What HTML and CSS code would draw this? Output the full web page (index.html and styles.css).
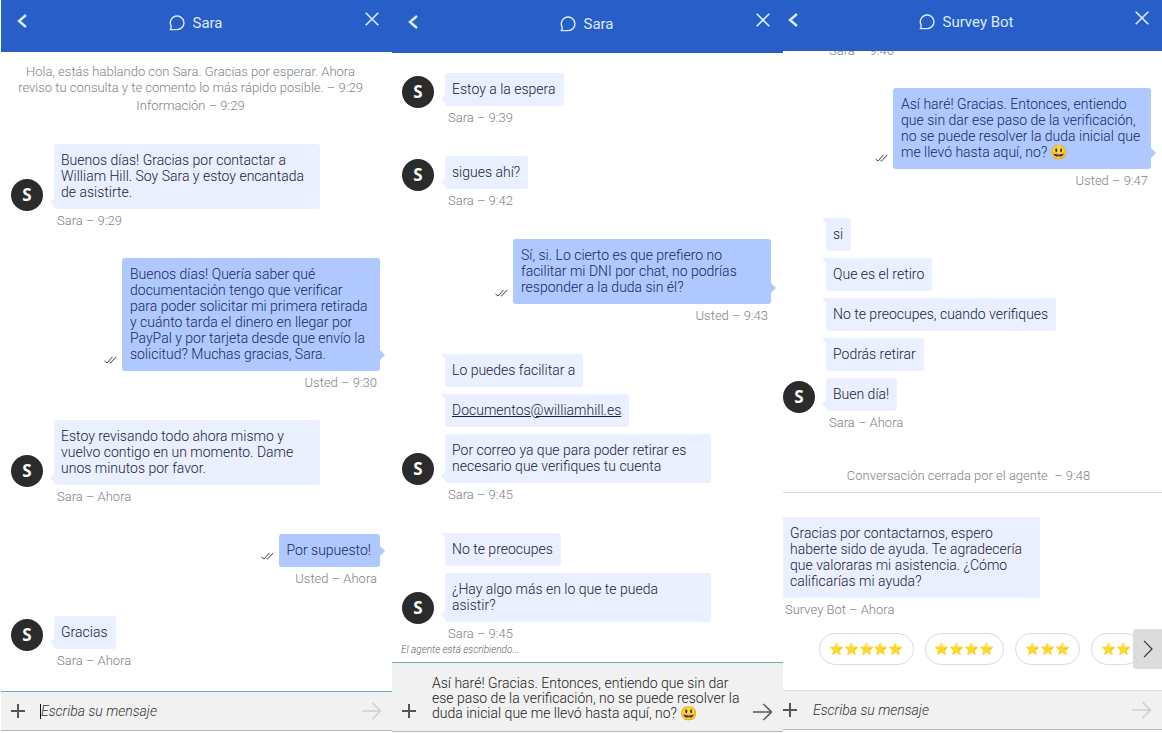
FILE: index.html
```html
<!DOCTYPE html>
<html lang="es">
<head>
    <meta charset="UTF-8">
    <meta name="viewport" content="width=device-width, initial-scale=1.0">
    <title>Chat de asistencia</title>
    <link rel="stylesheet" href="styles.css">
</head>
<body>
    <!-- Shared icons -->
    <svg class="icon-defs" aria-hidden="true">
        <symbol id="icon-back" viewBox="0 0 10 14">
            <path d="M9 1L2 7l7 6" fill="none" stroke="currentColor" stroke-width="2.4"/>
        </symbol>
        <symbol id="icon-chat" viewBox="0 0 16 16">
            <path d="M1.2 14.6h6.9a6.8 6.8 0 1 0-6.2-4c.5 1.5.4 2.7-.7 4z" fill="none" stroke="currentColor" stroke-width="1.4" stroke-linejoin="round"/>
        </symbol>
        <symbol id="icon-close" viewBox="0 0 14 14">
            <path d="M.7.7l12.6 12.6M13.3.7L.7 13.3" fill="none" stroke="currentColor" stroke-width="1.6"/>
        </symbol>
        <symbol id="icon-checks" viewBox="0 0 13 8">
            <path d="M.5 5l2.5 2L8.5.8M5.5 6.3l1 .8L12.3.8" fill="none" stroke="currentColor" stroke-width="1"/>
        </symbol>
        <symbol id="icon-plus" viewBox="0 0 14 14">
            <path d="M7 0v14M0 7h14" fill="none" stroke="currentColor" stroke-width="2"/>
        </symbol>
        <symbol id="icon-send" viewBox="0 0 20 18">
            <path d="M0 9h18M10.5 1l8 8-8 8" fill="none" stroke="currentColor" stroke-width="1.5"/>
        </symbol>
        <symbol id="icon-next" viewBox="0 0 10 18">
            <path d="M1 .8L9 9l-8 8.2" fill="none" stroke="currentColor" stroke-width="1.2"/>
        </symbol>
    </svg>

    <main class="screens">
        <section class="chat chat-first">
            <header class="chat-header">
                <button class="back-btn" aria-label="Volver"><svg><use href="#icon-back"/></svg></button>
                <h2 class="chat-title"><svg><use href="#icon-chat"/></svg>Sara</h2>
                <button class="close-btn" aria-label="Cerrar"><svg><use href="#icon-close"/></svg></button>
            </header>
            <div class="chat-log">
                <div class="notice">
                    <p>Hola, estás hablando con Sara. Gracias por esperar. Ahora reviso tu consulta y te comento lo más rápido posible. – 9:29</p>
                    <p>Información – 9:29</p>
                </div>
                <div class="received">
                    <div class="avatar">S</div>
                    <div class="bubbles">
                        <p class="bubble">Buenos días! Gracias por contactar a William Hill. Soy Sara y estoy encantada de asistirte.</p>
                    </div>
                    <div class="meta">Sara – 9:29</div>
                </div>
                <div class="sent">
                    <svg class="checks"><use href="#icon-checks"/></svg>
                    <p class="bubble">Buenos días! Quería saber qué documentación tengo que verificar para poder solicitar mi primera retirada y cuánto tarda el dinero en llegar por PayPal y por tarjeta desde que envío la solicitud? Muchas gracias, Sara.</p>
                    <div class="meta">Usted – 9:30</div>
                </div>
                <div class="received">
                    <div class="avatar">S</div>
                    <div class="bubbles">
                        <p class="bubble">Estoy revisando todo ahora mismo y vuelvo contigo en un momento. Dame unos minutos por favor.</p>
                    </div>
                    <div class="meta">Sara – Ahora</div>
                </div>
                <div class="sent">
                    <svg class="checks"><use href="#icon-checks"/></svg>
                    <p class="bubble">Por supuesto!</p>
                    <div class="meta">Usted – Ahora</div>
                </div>
                <div class="received">
                    <div class="avatar">S</div>
                    <div class="bubbles">
                        <p class="bubble">Gracias</p>
                    </div>
                    <div class="meta">Sara – Ahora</div>
                </div>
            </div>
            <form class="composer active">
                <button class="add-btn" type="button" aria-label="Adjuntar"><svg><use href="#icon-plus"/></svg></button>
                <span class="caret"></span>
                <input class="message-input" type="text" placeholder="Escriba su mensaje" aria-label="Mensaje">
                <button class="send-btn" type="button" aria-label="Enviar"><svg><use href="#icon-send"/></svg></button>
            </form>
        </section>

        <section class="chat chat-second">
            <header class="chat-header">
                <button class="back-btn" aria-label="Volver"><svg><use href="#icon-back"/></svg></button>
                <h2 class="chat-title"><svg><use href="#icon-chat"/></svg>Sara</h2>
                <button class="close-btn" aria-label="Cerrar"><svg><use href="#icon-close"/></svg></button>
            </header>
            <div class="chat-log">
                <div class="received">
                    <div class="avatar">S</div>
                    <div class="bubbles">
                        <p class="bubble">Estoy a la espera</p>
                    </div>
                    <div class="meta">Sara – 9:39</div>
                </div>
                <div class="received">
                    <div class="avatar">S</div>
                    <div class="bubbles">
                        <p class="bubble">sigues ahí?</p>
                    </div>
                    <div class="meta">Sara – 9:42</div>
                </div>
                <div class="sent">
                    <svg class="checks"><use href="#icon-checks"/></svg>
                    <p class="bubble">Sí, si. Lo cierto es que prefiero no facilitar mi DNI por chat, no podrías responder a la duda sin él?</p>
                    <div class="meta">Usted – 9:43</div>
                </div>
                <div class="received">
                    <div class="avatar">S</div>
                    <div class="bubbles">
                        <p class="bubble">Lo puedes facilitar a</p>
                        <p class="bubble"><a href="mailto:Documentos@williamhill.es">Documentos@williamhill.es</a></p>
                        <p class="bubble">Por correo ya que para poder retirar es necesario que verifiques tu cuenta</p>
                    </div>
                    <div class="meta">Sara – 9:45</div>
                </div>
                <div class="received">
                    <div class="avatar">S</div>
                    <div class="bubbles">
                        <p class="bubble">No te preocupes</p>
                        <p class="bubble">¿Hay algo más en lo que te pueda asistir?</p>
                    </div>
                    <div class="meta">Sara – 9:45</div>
                </div>
            </div>
            <p class="typing">El agente está escribiendo...</p>
            <form class="composer active">
                <button class="add-btn" type="button" aria-label="Adjuntar"><svg><use href="#icon-plus"/></svg></button>
                <textarea class="message-input" rows="3" aria-label="Mensaje">Así haré! Gracias. Entonces, entiendo que sin dar ese paso de la verificación, no se puede resolver la duda inicial que me llevó hasta aquí, no? 😃</textarea>
                <button class="send-btn ready" type="button" aria-label="Enviar"><svg><use href="#icon-send"/></svg></button>
            </form>
        </section>

        <section class="chat chat-third">
            <header class="chat-header">
                <button class="back-btn" aria-label="Volver"><svg><use href="#icon-back"/></svg></button>
                <h2 class="chat-title"><svg><use href="#icon-chat"/></svg>Survey Bot</h2>
                <button class="close-btn" aria-label="Cerrar"><svg><use href="#icon-close"/></svg></button>
            </header>
            <div class="chat-log">
                <div class="received">
                    <div class="meta">Sara – 9:46</div>
                </div>
                <div class="sent">
                    <svg class="checks"><use href="#icon-checks"/></svg>
                    <p class="bubble">Así haré! Gracias. Entonces, entiendo que sin dar ese paso de la verificación, no se puede resolver la duda inicial que me llevó hasta aquí, no? 😃</p>
                    <div class="meta">Usted – 9:47</div>
                </div>
                <div class="received">
                    <div class="avatar">S</div>
                    <div class="bubbles">
                        <p class="bubble">si</p>
                        <p class="bubble">Que es el retiro</p>
                        <p class="bubble">No te preocupes, cuando verifiques</p>
                        <p class="bubble">Podrás retirar</p>
                        <p class="bubble">Buen día!</p>
                    </div>
                    <div class="meta">Sara – Ahora</div>
                </div>
            </div>
            <p class="closed">Conversación cerrada por el agente &nbsp;– 9:48</p>
            <div class="survey">
                <p class="bubble">Gracias por contactarnos, espero haberte sido de ayuda. Te agradecería que valoraras mi asistencia. ¿Cómo calificarías mi ayuda?</p>
                <div class="meta">Survey Bot – Ahora</div>
                <div class="ratings">
                    <button class="rating">⭐⭐⭐⭐⭐</button>
                    <button class="rating">⭐⭐⭐⭐</button>
                    <button class="rating">⭐⭐⭐</button>
                    <button class="rating">⭐⭐</button>
                    <button class="next-btn" aria-label="Más opciones"><svg><use href="#icon-next"/></svg></button>
                </div>
            </div>
            <form class="composer">
                <button class="add-btn" type="button" aria-label="Adjuntar"><svg><use href="#icon-plus"/></svg></button>
                <input class="message-input" type="text" placeholder="Escriba su mensaje" aria-label="Mensaje">
                <button class="send-btn" type="button" aria-label="Enviar"><svg><use href="#icon-send"/></svg></button>
            </form>
        </section>
    </main>
</body>
</html>
```
FILE: styles.css
```css
* {
    margin: 0;
    padding: 0;
    box-sizing: border-box;
}

body {
    font-family: Roboto, "Noto Color Emoji", sans-serif;
    font-size: 14px;
    font-weight: 300;
    line-height: 16px;
    color: #1b2140;
    background: white;
}

button {
    border: none;
    background: none;
    color: inherit;
    cursor: pointer;
    flex-shrink: 0;
}

svg {
    display: block;
}

.icon-defs {
    position: absolute;
    width: 0;
    height: 0;
}

.screens {
    display: grid;
    grid-template-columns: 392fr 391fr 379fr;
    min-height: 100vh;
}

.chat {
    display: flex;
    flex-direction: column;
    min-width: 0;
    --gutter: 10px;
}

.chat-first {
    padding: 0 0 2px 1px;
}

.chat-second {
    padding-bottom: 1px;
}

.chat-third {
    padding-bottom: 3px;
    --gutter: 0px;
}

/* Header */
.chat-header {
    display: flex;
    justify-content: space-between;
    align-items: flex-start;
    height: 52px;
    padding: 12px 13px 0 16px;
    background: #285ec8;
    color: #dcebff;
}

.chat-second .chat-header {
    height: 53px;
    padding-top: 13px;
}

.chat-third .chat-header {
    height: 51px;
    padding: 11px 13px 0 5px;
}

.back-btn {
    margin-top: 2px;
}

.back-btn svg {
    width: 10px;
    height: 14px;
}

.chat-title {
    display: flex;
    align-items: center;
    gap: 7px;
    font-size: 15px;
    font-weight: 400;
    line-height: 22px;
}

.chat-title svg {
    width: 16px;
    height: 16px;
}

.close-btn svg {
    width: 14px;
    height: 14px;
}

/* Messages */
.chat-log {
    display: flex;
    flex-direction: column;
    gap: 29px;
    overflow: hidden;
    padding: 12px 12px 0 var(--gutter);
}

.chat-second .chat-log {
    gap: 30px;
    padding-top: 20px;
}

.chat-third .chat-log {
    padding-top: 0;
    padding-right: 11px;
}

.chat-third .received:first-child {
    margin-top: -12px;
}

.notice {
    padding: 0 16px 1px 6px;
    text-align: center;
    font-size: 13px;
    color: #7d8388;
}

.notice p + p {
    margin-top: 2px;
}

.received {
    display: grid;
    grid-template-columns: 32px auto;
    column-gap: 11px;
    justify-content: start;
}

.avatar {
    align-self: end;
    width: 32px;
    height: 32px;
    margin-bottom: -2px;
    border-radius: 50%;
    background: #2b2b2b;
    color: white;
    font-family: "Open Sans", sans-serif;
    font-size: 17px;
    font-weight: 700;
    line-height: 32px;
    text-align: center;
}

.bubbles {
    display: flex;
    flex-direction: column;
    align-items: flex-start;
    gap: 7px;
}

.bubble {
    position: relative;
    max-width: 266px;
    padding: 8px 8px 9px 7px;
    border-radius: 3px;
    background: #eaf0ff;
}

.bubble a {
    color: inherit;
}

.received .bubble::before {
    content: "";
    position: absolute;
    left: -4px;
    top: 0;
    border-top: 6px solid #eaf0ff;
    border-left: 5px solid transparent;
}

.received .bubble:last-child::before {
    top: auto;
    bottom: 3px;
    border-top: 4px solid transparent;
    border-bottom: 4px solid transparent;
    border-left: none;
    border-right: 4px solid #eaf0ff;
}

.meta {
    margin-top: 4px;
    font-size: 13px;
    color: #7d8388;
}

.received .meta {
    grid-column: 2;
    padding-left: 3px;
}

.sent {
    display: grid;
    grid-template-columns: auto auto;
    column-gap: 5px;
    justify-content: end;
}

.checks {
    align-self: end;
    width: 13px;
    height: 8px;
    margin-bottom: 7px;
    color: #3c3f48;
}

.sent .bubble {
    max-width: 258px;
    padding-left: 8px;
    padding-right: 9px;
    background: #afc8ff;
    color: #17285c;
}

.sent .bubble::after {
    content: "";
    position: absolute;
    left: 100%;
    bottom: 11px;
    border-top: 5px solid transparent;
    border-bottom: 5px solid transparent;
    border-left: 5px solid #afc8ff;
}

.sent .meta {
    grid-column: 2;
    padding-right: 3px;
    text-align: right;
}

.typing {
    margin-top: auto;
    padding: 0 9px 4px;
    font-size: 10px;
    font-style: italic;
    color: #5c6166;
}

.closed {
    margin-top: 37px;
    padding: 0 8px 8px 0;
    border-bottom: 1px solid #dcdcdc;
    font-size: 13px;
    text-align: center;
    color: #7d8388;
}

/* Survey */
.survey {
    padding-top: 24px;
}

.survey .bubble {
    max-width: 257px;
    border-radius: 0;
}

.survey .meta {
    padding-left: 2px;
}

.ratings {
    position: relative;
    display: flex;
    gap: 11px;
    overflow: hidden;
    margin-top: 11px;
    padding: 4px 0 4px 36px;
}

.rating {
    height: 32px;
    padding: 0 9px;
    border: 1px solid #dcdcdc;
    border-radius: 16px;
    background: white;
    font-family: "Noto Color Emoji", sans-serif;
    font-size: 12px;
    white-space: nowrap;
}

.next-btn {
    position: absolute;
    right: 0;
    top: 0;
    display: flex;
    align-items: center;
    justify-content: center;
    width: 29px;
    height: 40px;
    border-radius: 3px 0 0 3px;
    background: #dcdcdc;
    color: #333;
}

.next-btn svg {
    width: 10px;
    height: 18px;
}

/* Composer */
.composer {
    display: flex;
    align-items: center;
    min-height: 40px;
    margin-top: auto;
    padding: 0 10px 0 var(--gutter);
    border-top: 1px solid #e2e2e2;
    border-bottom: 1px solid #b8b8bc;
    background: #f1f1f1;
}

.composer.active {
    border-top-color: #6bb0b8;
}

.chat-second .composer {
    align-items: flex-end;
    min-height: 70px;
    margin-top: 0;
    padding-top: 12px;
    padding-bottom: 10px;
}

.add-btn svg {
    width: 14px;
    height: 14px;
    color: #555;
}

.chat-second .add-btn {
    padding-bottom: 3px;
}

.caret {
    width: 1px;
    height: 15px;
    margin: 0 -16px 0 15px;
    background: #111;
}

.message-input {
    flex: 1;
    min-width: 0;
    margin-left: 16px;
    border: none;
    outline: none;
    resize: none;
    overflow: hidden;
    background: transparent;
    color: #1c1c1c;
    font: inherit;
    line-height: 15px;
}

.message-input::placeholder {
    color: #333;
    font-style: italic;
    opacity: 1;
}

.send-btn {
    color: #cfcfcf;
}

.send-btn.ready {
    color: #555;
}

.send-btn svg {
    width: 20px;
    height: 18px;
}
```
